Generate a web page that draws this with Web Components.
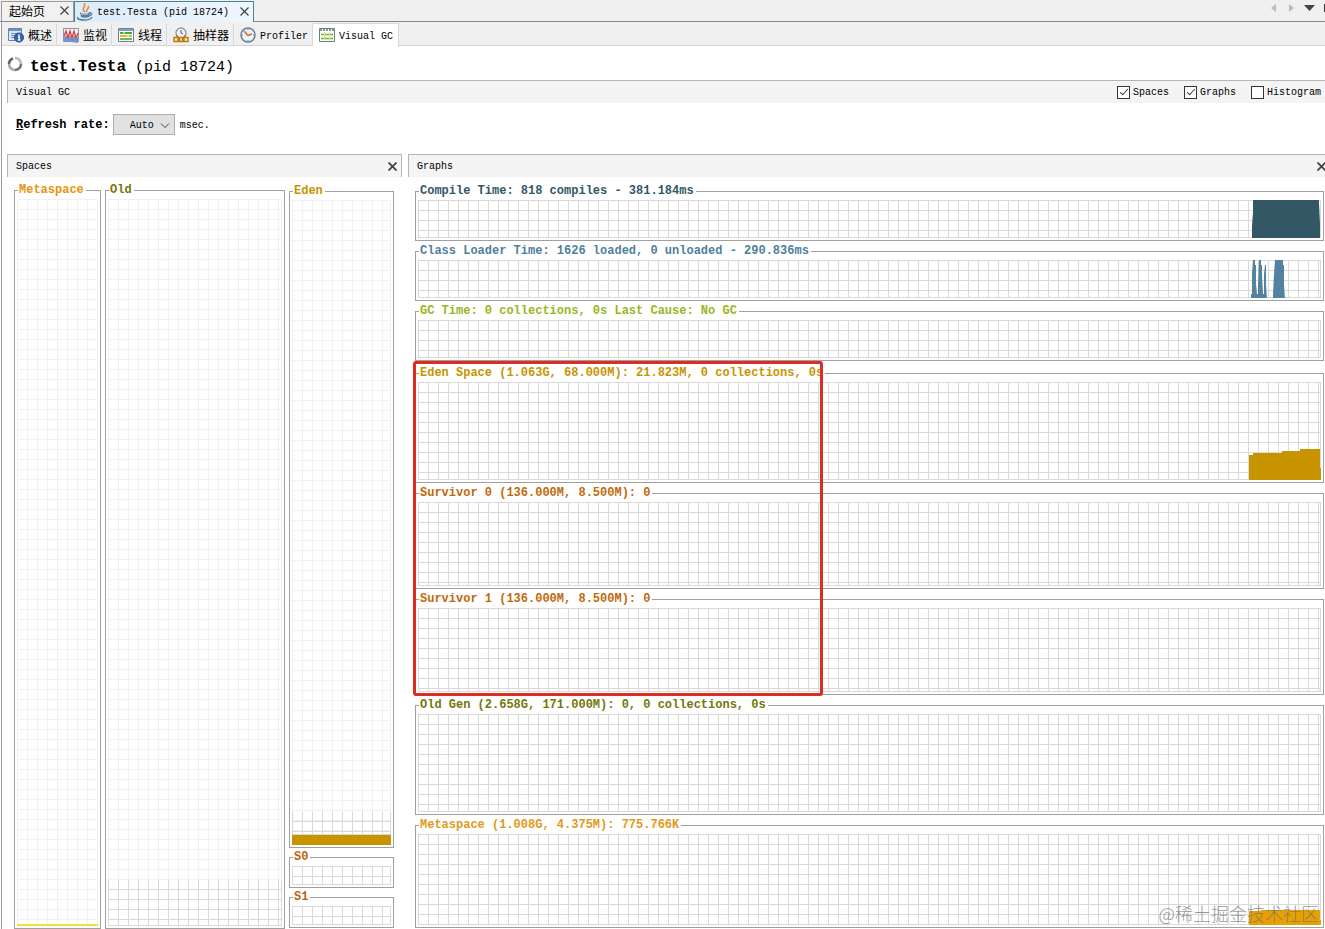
<!DOCTYPE html>
<html lang="zh-CN">
<head>
<meta charset="utf-8">
<title>Visual GC</title>
<style>
html,body{margin:0;height:100%;background:#fff}
body{font:10px/12px "Liberation Mono","Noto Sans CJK SC",monospace;color:#000;overflow:hidden}
</style>
</head>
<body>
<visual-gc-app></visual-gc-app>
<script>
function define(name, html, setup){
  const t=document.createElement('template');
  t.innerHTML=html;
  customElements.define(name,class extends HTMLElement{
    constructor(){
      super();
      this.attachShadow({mode:'open'}).append(t.content.cloneNode(true));
    }
    connectedCallback(){ if(setup) setup(this,this.shadowRoot); }
  });
}

define('close-button',`
<style>
:host{display:flex}
button{display:flex;padding:0;border:0;background:none}
svg{display:block;width:9px;height:9px;fill:none;stroke:#444;stroke-width:var(--cross,1.2)}
</style>
<button type="button" aria-label="Close"><svg viewBox="0 0 9 9"><path d="M.5.5l8 8M8.5.5l-8 8"/></svg></button>`);

define('doc-tab',`
<style>
:host{display:flex;align-items:center;box-sizing:border-box;height:21px;border:1px solid #9a9a9a;border-bottom:0;background:#f1f1f1;padding:0 4px 0 7px;gap:4px}
:host([selected]){border-color:#4c8197;background:linear-gradient(90deg,#dcebf8,#eff7ff);padding-left:2px}
a{flex:1;padding-top:2px;color:#000;text-decoration:none;white-space:nowrap}
:host([cjk]) a{font-size:12px;line-height:16px}
close-button{margin-bottom:2px}
</style>
<slot name="icon"></slot><a href="#"><slot></slot></a><close-button></close-button>`);

define('view-tab',`
<style>
:host{display:block}
a{display:flex;align-items:center;box-sizing:border-box;height:22px;gap:4px;padding:2px 4px 0 6px;color:#000;text-decoration:none;white-space:nowrap;border-right:1px solid #d9d9d9;font-size:12px;line-height:16px}
span{padding-top:2px}
::slotted(svg){margin-top:-2px}
:host([latin]) a{font-size:10px}
:host([selected]) a{background:#fff;height:24px;margin-top:-1px;padding:0 5px 0 6px;border-top:1px solid #d9d9d9}
</style>
<a href="#"><slot name="icon"></slot><span><slot></slot></span></a>`);

define('panel-header',`
<style>
:host{display:flex;align-items:center;justify-content:space-between;box-sizing:border-box;height:23px;padding:0 4px 0 8px;background:#f4f4f4;border-top:1px solid #b5b5b5;border-left:1px solid #b5b5b5}
span{padding-top:2px}
</style>
<span><slot></slot></span><slot name="end"></slot>`);

define('check-option',`
<style>
label{display:flex;align-items:center;gap:3px}
span{padding-top:2px}
input{appearance:none;position:relative;box-sizing:border-box;width:13px;height:13px;margin:0;border:1px solid #333;background:#fff}
input:checked::after{content:"";position:absolute;left:4px;top:0;width:3px;height:7px;border:solid #333;border-width:0 1px 1px 0;transform:rotate(42deg)}
</style>
<label><input type="checkbox"><span><slot></slot></span></label>`,
(host,root)=>{root.querySelector('input').checked=host.hasAttribute('checked')});

define('gc-plot',`
<style>
:host{display:flex;min-height:0;min-width:0}
fieldset{flex:1;display:flex;box-sizing:border-box;min-width:0;min-height:0;margin:0;padding:2px;border:1px solid #a0a0a0}
legend{padding:0 2px 0 1px;margin-left:1px;font-size:12px;line-height:13px;font-weight:bold;color:var(--tone);white-space:nowrap}
.plot{--line:#d9d9d9;flex:1;display:flex;flex-direction:column;justify-content:flex-end;align-items:flex-end;min-height:0;
background:linear-gradient(var(--line),var(--line)) 100% 0/1px 100% no-repeat,
linear-gradient(var(--line),var(--line)) 0 100%/100% 1px no-repeat,
linear-gradient(90deg,var(--line) 1px,transparent 1px) 0 0/10px 10px,
linear-gradient(var(--line) 1px,transparent 1px) 0 0/10px 10px}
:host([faint]) .plot{--line:#f1f1f1}
</style>
<fieldset><legend></legend><div class="plot"><slot></slot></div></fieldset>`,
(host,root)=>{
  root.querySelector('legend').textContent=host.getAttribute('label');
  host.style.setProperty('--tone',host.getAttribute('tone'));
});

define('committed-grid',`
<style>
:host{display:block;width:100%;flex:none;
background:linear-gradient(#d9d9d9,#d9d9d9) 100% 0/1px 100% no-repeat,
linear-gradient(#d9d9d9,#d9d9d9) 0 100%/100% 1px no-repeat,
linear-gradient(90deg,#d9d9d9 1px,transparent 1px) 0 0/10px 10px,
linear-gradient(#d9d9d9 1px,transparent 1px) 0 9px/10px 10px}
</style>`);

define('spaces-view',`
<style>
:host{display:grid;grid-template-columns:87fr 180fr 105fr;gap:4px;box-sizing:border-box;padding:7px 8px 0 7px;min-height:0}
.young{display:grid;grid-template-rows:1fr 37px 37px;gap:3px;min-height:0;padding:1px 0}
.bar{width:100%;flex:none}
</style>
<gc-plot faint label="Metaspace" tone="#e8940c"><div class="bar" style="height:2px;background:#f7e034"></div></gc-plot>
<gc-plot faint label="Old" tone="#76760a"><committed-grid style="height:46px"></committed-grid></gc-plot>
<div class="young">
<gc-plot faint label="Eden" tone="#c79400"><committed-grid style="height:23px"></committed-grid><div class="bar" style="height:10px;background:#c79400"></div></gc-plot>
<gc-plot label="S0" tone="#bf640c"></gc-plot>
<gc-plot label="S1" tone="#bf640c"></gc-plot>
</div>`);

define('graphs-view',`
<style>
:host{position:relative;display:grid;grid-template-columns:minmax(0,1fr);grid-template-rows:56px 56px 56px 118fr 102fr 102fr 116fr 109fr;row-gap:4px;box-sizing:border-box;padding:8px 1px 1px 7px;min-height:0}
svg{display:block;flex:none}
.eden{padding-top:2px}
.mark{position:absolute;grid-area:4/1/7/2;top:-4px;bottom:-1px;left:-2px;width:404px;border:3px solid #dc2d24;border-radius:3px}
.water{position:absolute;right:6px;bottom:4px;font:18px/24px "Noto Sans CJK SC",sans-serif;font-weight:300;color:rgba(115,115,115,.75)}
</style>
<gc-plot label="Compile Time: 818 compiles - 381.184ms" tone="#345766"><svg width="70" height="38"><path fill="#345766" d="M1 39V26L2 12V0H68V3L69 24V39z"/></svg></gc-plot>
<gc-plot label="Class Loader Time: 1626 loaded, 0 unloaded - 290.836ms" tone="#4f7f9c"><svg width="70" height="38"><path fill="#54839f" d="M0 39V34H1V14L2 0H4V5H5V24L6 34H7V24L8 0H10V5H11V14L12 34H13V14L14 5H15V24L16 39zM22 39V34L23 14L24 0H32V5H33V24L34 39z"/></svg></gc-plot>
<gc-plot label="GC Time: 0 collections, 0s Last Cause: No GC" tone="#96b81e"></gc-plot>
<gc-plot class="eden" label="Eden Space (1.063G, 68.000M): 21.823M, 0 collections, 0s" tone="#c79400"><svg width="72" height="31"><path fill="#c79400" d="M0 31V6H4V4H33V2H51V0H71V19H72V31z"/></svg></gc-plot>
<gc-plot label="Survivor 0 (136.000M, 8.500M): 0" tone="#bf6a0c"></gc-plot>
<gc-plot label="Survivor 1 (136.000M, 8.500M): 0" tone="#bf6a0c"></gc-plot>
<gc-plot label="Old Gen (2.658G, 171.000M): 0, 0 collections, 0s" tone="#76760a"></gc-plot>
<gc-plot label="Metaspace (1.008G, 4.375M): 775.766K" tone="#df9a1a"><svg width="72" height="15"><path fill="#e8a000" d="M0 15V1H12V0H71V10H72V15z"/></svg></gc-plot>
<div class="mark"></div>
<div class="water">@稀土掘金技术社区</div>`);

define('visual-gc-app',`
<style>
:host{display:flex;flex-direction:column;height:100vh}
svg{display:block;flex:none}
.docs{display:flex;height:22px;flex:none;box-sizing:border-box;padding:0 0 0 1px;background:linear-gradient(#888,#888) 0 100%/100% 1px no-repeat #f0f0f0}
.docs doc-tab{margin-top:1px}
.docs doc-tab:nth-child(1){width:73px;height:20px}
.docs doc-tab:nth-child(2){width:180px;height:21px}
.nav{display:flex;margin-left:auto;gap:9px;padding-top:4px}
.nav button{padding:0;border:0;background:none;height:8px}
.main{flex:1;min-height:0;display:flex;flex-direction:column;margin-left:1px;border-left:1px solid #999}
.views{display:flex;flex:none;box-sizing:border-box;height:24px;padding-top:2px;background:linear-gradient(#d5d5d5,#d5d5d5) 0 100%/100% 1px no-repeat #f0f0f0}
.body{flex:1;min-height:0;display:flex;flex-direction:column;padding-left:5px}
.title{display:flex;gap:7px;height:34px;flex:none}
.title svg{margin-top:10px}
h1{margin:11px 0 0;font-size:16px;line-height:20px;white-space:pre}
h1 span{font-size:15px;font-weight:normal}
.opts{display:flex;gap:15px}
.rate{display:flex;align-items:center;gap:5px;flex:none;height:43px;padding-left:9px}
.rate label{font-size:12px;font-weight:bold;line-height:16px;margin-right:-2px}
.rate>span{padding-top:2px}
.sel{position:relative;display:flex}
select{appearance:none;box-sizing:border-box;width:62px;height:21px;margin:0;padding:2px 0 0 16px;border:1px solid #adadad;border-radius:0;background:#e1e1e1;font:inherit;color:#000}
.sel svg{position:absolute;right:5px;top:9px;pointer-events:none}
.split{flex:1;min-height:0;display:grid;grid-template-columns:395px minmax(0,1fr);gap:6px;padding-top:8px}
.pane{display:flex;flex-direction:column;min-height:0;min-width:0}
.pane>:last-child{flex:1}
.pane panel-header{--cross:1.8;flex:none}
.pane:first-child panel-header{border-right:1px solid #b5b5b5}
.pane:last-child panel-header{padding-right:0;margin-right:-1px}
</style>
<div class="docs">
<doc-tab cjk>起始页</doc-tab>
<doc-tab selected><svg slot="icon" width="16" height="18" viewBox="0 0 16 18" fill="none"><path d="M8 9C3 6 10 4 7 0M10 9c-2-3 3-3 1-6" stroke="#e88a28" stroke-width="1.6"/><path d="M3 9c3 2 7 2 10 0l-1 5c-2 1-6 1-8 0z" fill="#56809f"/><path d="M12 10c4-1 3 3-1 3M0 14c1 4 13 4 15 0" stroke="#56809f" stroke-width="1.5"/><path d="M4 11h7" stroke="#c9dbe8"/></svg>test.Testa (pid 18724)</doc-tab>
<div class="nav">
<button aria-label="Left"><svg width="8" height="8"><path d="M6 0v8L1 4z" fill="#bbb"/></svg></button>
<button aria-label="Right"><svg width="8" height="8"><path d="M2 0v8l5-4z" fill="#bbb"/></svg></button>
<button aria-label="List"><svg width="11" height="8"><path d="M0 1h11L5.500 7z" fill="#444"/></svg></button>
<svg width="1" height="8"><path d="M0 0h1v8H0z" fill="#333"/></svg>
</div>
</div>
<div class="main">
<div class="views">
<view-tab><svg slot="icon" width="16" height="16" viewBox="0 0 16 16"><path fill="#dce8f8" stroke="#6782ad" d="M.5 1.500h13v12H.5z"/><path d="M1 2h12v2H1z" fill="#7191c4"/><path d="M3 6.500h6M3 8.500h4M3 10.500h4" stroke="#6f8cb8"/><circle cx="11" cy="10.500" r="4.500" fill="#3565b0" stroke="#234a8a"/><path d="M11 7.300v1.500M10 9.800h1.200v3M9.800 13h2.600" stroke="#fff" stroke-width="1.400" fill="none"/></svg>概述</view-tab>
<view-tab><svg slot="icon" width="16" height="16" viewBox="0 0 16 16"><path fill="#edf3fb" stroke="#8798ac" d="M.5 1.500h15v13H.5z"/><path d="M1 14V10l2-2 2 4 2-4 2 4 2-4 2 4 2-3v7z" fill="#6c98d4"/><path d="M1 9l2-5 2 7 2-7 2 7 2-7 2 7 2-5" fill="none" stroke="#dc3b3b" stroke-width="1.300"/></svg>监视</view-tab>
<view-tab><svg slot="icon" width="16" height="16" viewBox="0 0 16 16"><path fill="#fff" stroke="#67839a" d="M.5 1.500h15v13H.5z"/><path d="M1 3h14" stroke="#86a0b4" stroke-width="2"/><path d="M2 6h12" stroke="#40a950" stroke-width="2"/><path d="M2 9h12" stroke="#e4b52d" stroke-width="2"/><path d="M2 12h12" stroke="#65b95c" stroke-width="2"/><path d="M6 5v2M10 8v2" stroke="#fff"/></svg>线程</view-tab>
<view-tab><svg slot="icon" width="16" height="16" viewBox="0 0 16 16"><circle cx="8" cy="6" r="5" fill="#eef5fb" stroke="#8c9ba8" stroke-width="1.400"/><path d="M8 3v3l2 1" fill="none" stroke="#456"/><path d="M1 10.500h4v4H1zM6.500 10.500h3v4h-3zM11 10.500h4v4h-4zM4 10V8M12 10V8" fill="#fff0bd" stroke="#bc7a14" stroke-width="1.500"/></svg>抽样器</view-tab>
<view-tab latin><svg slot="icon" width="16" height="16" viewBox="0 0 16 16"><circle cx="8" cy="8" r="7" fill="#edf5fc" stroke="#697f93" stroke-width="1.500"/><path d="M8 2v1M8 13v1M2 8h1M13 8h1" stroke="#678"/><path d="M4 4l4 4.500L12 7" fill="none" stroke="#dd6a36" stroke-width="1.600"/></svg>Profiler</view-tab>
<view-tab latin selected><svg slot="icon" width="16" height="16" viewBox="0 0 16 16"><path fill="#fffef0" stroke="#6e7e7e" d="M.5 1.500h15v13H.5z"/><path d="M1 3h14" stroke="#8593a0" stroke-width="2" stroke-dasharray="2 1"/><path d="M2 7.500h12M2 11.500h12" stroke="#58b947" stroke-width="1.500"/><path d="M5 7.500h3M9 11.500h3" stroke="#e5b321" stroke-width="1.500"/><path d="M5.500 5v8M10.500 5v8" stroke="#d9dfb0"/></svg>Visual GC</view-tab>
</div>
<div class="body">
<div class="title"><svg width="16" height="16" viewBox="0 0 16 16" fill="none" stroke-width="2.600"><path d="M8 2a6 6 0 0 1 6 6" stroke="#bbb"/><path d="M14 8a6 6 0 0 1-6 6" stroke="#777"/><path d="M8 14a6 6 0 0 1-6-6" stroke="#aaa"/><path d="M2 8a6 6 0 0 1 4-5.600" stroke="#666"/></svg><h1>test.Testa<span> (pid 18724)</span></h1></div>
<panel-header>Visual GC<div slot="end" class="opts"><check-option checked>Spaces</check-option><check-option checked>Graphs</check-option><check-option>Histogram</check-option></div></panel-header>
<div class="rate"><label for="rate"><u>R</u>efresh rate:</label><div class="sel"><select id="rate"><option>Auto</option></select><svg width="10" height="6"><path d="M1 .5l4 4 4-4" fill="none" stroke="#444"/></svg></div><span>msec.</span></div>
<div class="split">
<section class="pane"><panel-header>Spaces<close-button slot="end"></close-button></panel-header><spaces-view></spaces-view></section>
<section class="pane"><panel-header>Graphs<close-button slot="end"></close-button></panel-header><graphs-view></graphs-view></section>
</div>
</div>
</div>`);
</script>
</body>
</html>
